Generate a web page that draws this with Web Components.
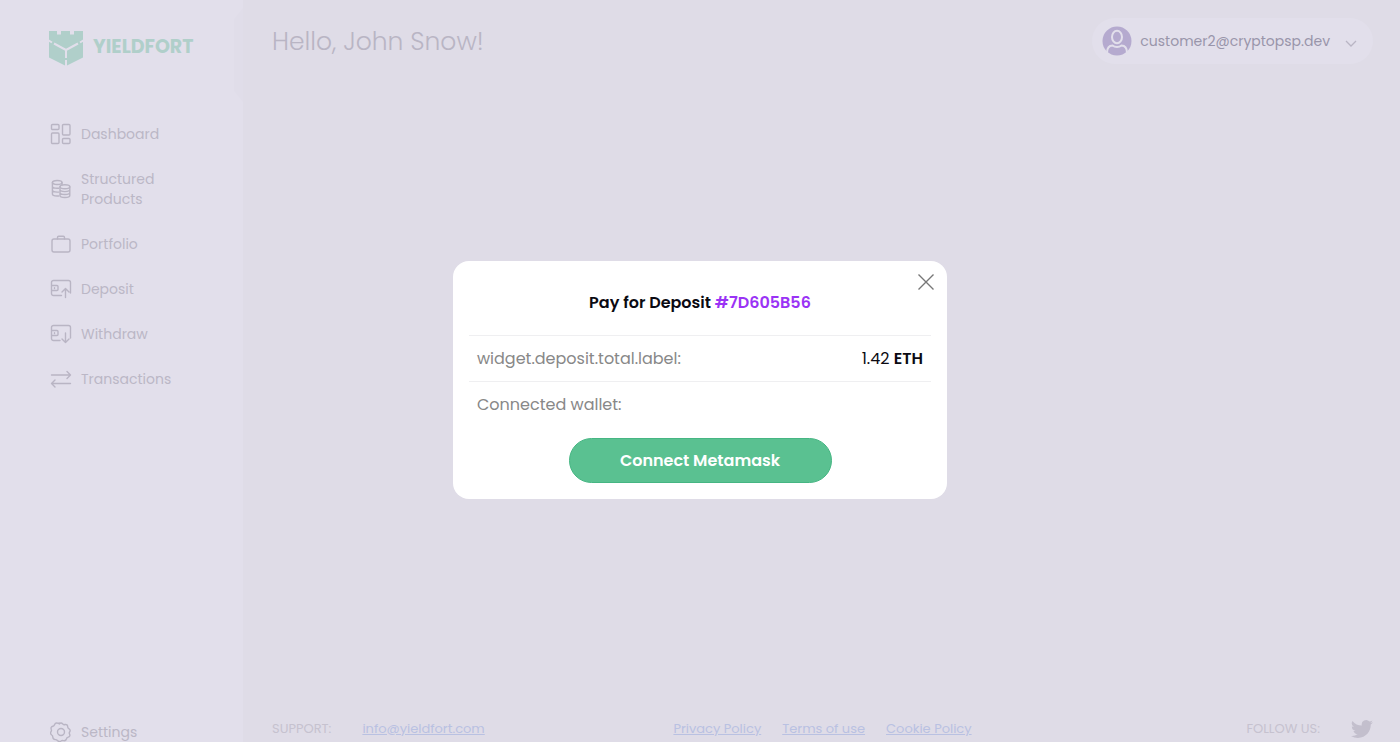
<!DOCTYPE html>
<html lang="en">
<head>
<meta charset="utf-8">
<title>Yieldfort</title>
<style>
  body { margin: 0; background: #dfdce7; font-family: Poppins, Inter, sans-serif; font-size: 14px; font-weight: 400; color: #b9b5c4; }
</style>
</head>
<body>
<yf-app>
  <yf-sidebar slot="side">
    <yf-nav-item icon="dashboard">Dashboard</yf-nav-item>
    <yf-nav-item icon="coins">Structured<br>Products</yf-nav-item>
    <yf-nav-item icon="case">Portfolio</yf-nav-item>
    <yf-nav-item icon="deposit">Deposit</yf-nav-item>
    <yf-nav-item icon="withdraw">Withdraw</yf-nav-item>
    <yf-nav-item icon="swap">Transactions</yf-nav-item>
    <yf-nav-item slot="bottom" icon="gear">Settings</yf-nav-item>
  </yf-sidebar>
  <yf-header slot="head">Hello, John Snow!<yf-account slot="account">customer2@cryptopsp.dev</yf-account></yf-header>
  <yf-footer slot="foot"></yf-footer>
</yf-app>
<yf-modal>
  <span slot="title">Pay for Deposit </span>
  <span slot="ref">#7D605B56</span>
  <yf-row label="widget.deposit.total.label:">1.42 <b>ETH</b></yf-row>
  <yf-row label="Connected wallet:"></yf-row>
  <yf-button slot="action">Connect Metamask</yf-button>
</yf-modal>

<script>
const define = (name, html) => customElements.define(name, class extends HTMLElement {
  constructor() {
    super();
    this.attachShadow({ mode: 'open' }).innerHTML = typeof html === 'function' ? html(this) : html;
  }
});

const icons = {
  dashboard: '<rect x="1.500" y="1.500" width="7.500" height="5" rx="1"/><rect x="12.500" y="1.500" width="7.500" height="10.500" rx="1"/><rect x="1.500" y="10" width="7.500" height="10.500" rx="1"/><rect x="12.500" y="15.500" width="7.500" height="5" rx="1"/>',
  coins: '<ellipse cx="7.200" cy="4.500" rx="4.800" ry="2"/><path d="M2.400 4.500v11.500c0 1.200 2.100 2 4.800 2h1.500M12 4.500v2.500M2.400 8.300c0 1.200 2.100 2 4.800 2h1.500M2.400 12.100c0 1.200 2.100 2 4.800 2h1.500"/><ellipse cx="14.900" cy="8.700" rx="4.900" ry="2"/><path d="M10 8.700v8.800c0 1.200 2.200 2 4.900 2s4.900-.8 4.900-2V8.700M10 11.600c0 1.200 2.200 2 4.900 2s4.900-.8 4.900-2M10 14.500c0 1.200 2.200 2 4.900 2s4.900-.8 4.900-2"/>',
  case: '<rect x="2" y="6" width="18" height="13" rx="2"/><path d="M7.500 6V4.500a1.200 1.200 0 0 1 1.200-1.200h4.600a1.200 1.200 0 0 1 1.200 1.200V6"/>',
  deposit: '<path d="M11.500 17.500H3.500a2 2 0 0 1-2-2V4.500a2 2 0 0 1 2-2h15a2 2 0 0 1 2 2v10.500M1.500 7.500h5.500a1 1 0 0 1 1 1v3a1 1 0 0 1-1 1H1.500M4.500 9.800v.7M15.500 19.500v-9M12 14l3.500-3.500 3.500 3.500"/>',
  withdraw: '<path d="M10 17.500H3.500a2 2 0 0 1-2-2V4.500a2 2 0 0 1 2-2h15a2 2 0 0 1 2 2v10.500M1.500 7.500h5.500a1 1 0 0 1 1 1v3a1 1 0 0 1-1 1H1.500M4.500 9.800v.7M15.500 10v9.500M12 16l3.500 3.500 3.500-3.500"/>',
  swap: '<path d="M1.500 7h19M17 3.500L20.500 7L17 10.500M20.500 15.500h-19M5 12l-3.500 3.500L5 19"/>',
  gear: '<circle cx="11" cy="11" r="3.500"/><path d="M9.200 3q1.800-2 3.600 0 1 1 2.200.5 2.600-.3 2.700 2.200 0 1.300 1.100 1.900 2.200 1.400.8 3.400-.7 1.100 0 2.100 1 2.300-1.500 3.100-1.300.3-1.600 1.500-.7 2.500-3.100 1.900-1.300-.5-2.400.4-2 1.300-3.600-.5-.8-1-2.100-.9-2.500-.2-2.500-2.600 0-1.300-1.100-2-2-1.500-.6-3.500.7-1.100.1-2.300-.7-2.400 1.700-3 1.200-.3 1.600-1.500.9-2.300 3.200-1.500 1 .2 1.500-.2z"/>'
};

define('yf-app', `<style>
  :host { display: grid; grid-template-columns: 243px 1fr; height: 100vh; overflow: hidden; }
  main { display: flex; flex-direction: column; justify-content: space-between; padding: 18px 27px 3px 29px; }
</style><slot name="side"></slot><main><slot name="head"></slot><slot name="foot"></slot></main>`);

define('yf-sidebar', `<style>
  :host { position: relative; display: flex; flex-direction: column; justify-content: space-between; box-sizing: border-box; height: 100vh; padding: 28px 48px 0 48px; background: #e2dfeb; }
  /* collapse tab on the sidebar's edge */
  :host::after { content: ""; position: absolute; top: 8px; right: 0; width: 9px; height: 94px; background: #e0dde9; clip-path: polygon(100% 0, 0 12%, 0 88%, 100% 100%); }
  .logo { display: flex; align-items: center; gap: 9px; color: #b0cfca; font: 700 19px/36px Poppins, Inter, sans-serif; text-decoration: none; }
  svg { width: 36px; height: 38px; }
  nav { display: flex; flex-direction: column; gap: 25px; margin-top: 58px; }
</style>
<div><a class="logo" href="#"><svg viewBox="0 0 36 38"><path fill="#b0cfca" d="M1 3h8v3.500h4V3h9v3.500h4V3h9v26.500L18 38 1 29.500z"/><path fill="none" stroke="#e2dfeb" stroke-width="2" d="M0 12l4 2.500M36 12l-4 2.500M6 15.500l12 6.500 12-6.500M18 22v8M18 32v6"/></svg>YIELDFORT</a>
<nav aria-label="Main"><slot></slot></nav></div><slot name="bottom"></slot>`);

define('yf-nav-item', el => `<style>
  :host { display: block; }
  a { display: flex; align-items: center; gap: 9px; padding-left: 2px; color: #bbb7c6; text-decoration: none; font-size: 14px; line-height: 20px; font-weight: 400; white-space: nowrap; }
  svg { width: 22px; height: 22px; margin: -1px 0; fill: none; stroke: #b9b5c4; stroke-width: 1.400; stroke-linecap: round; stroke-linejoin: round; }
</style><a href="#"><svg viewBox="0 0 22 22">${icons[el.getAttribute('icon')]}</svg><span><slot></slot></span></a>`);

define('yf-header', `<style>
  :host { display: flex; justify-content: space-between; align-items: center; }
  h1 { margin: 0; font-size: 25px; line-height: 45px; font-weight: 300; color: #b9b5c4; }
</style><h1><slot></slot></h1><slot name="account"></slot>`);

define('yf-account', `<style>
  button { display: flex; align-items: center; gap: 8px; height: 46px; padding: 0 16px 0 10px; border: 0; border-radius: 23px; background: #e2dfeb; color: #9995aa; font: 400 14px/24px Poppins, Inter, sans-serif; }
  .chev { margin: 5px 0 0 7px; }
</style><button type="button"><svg width="30" height="30" viewBox="0 0 30 30"><circle cx="15" cy="15" r="14.500" fill="#b5aacf"/><g fill="none" stroke="#e2dfeb" stroke-width="2"><ellipse cx="15" cy="11" rx="5" ry="6.200"/><path d="M5 27c0-5.500 2-7.500 5.500-7.500 2.500 2 6.500 2 9 0 3.500 0 5.500 2 5.500 7.500"/></g></svg><span><slot></slot></span><svg class="chev" width="12" height="8" viewBox="0 0 12 8" fill="none" stroke="#b9b5c4" stroke-width="1.300"><path d="M1 1l5 5 5-5"/></svg></button>`);

define('yf-footer', `<style>
  :host { display: grid; grid-template-columns: 1fr auto 1fr; align-items: center; font-size: 13px; line-height: 20px; font-weight: 400; color: #c6c2cf; }
  div { display: flex; align-items: center; gap: 21px; }
  .wide { gap: 31px; }
  .end { justify-content: flex-end; }
  a { color: #b9c1e2; }
  svg { display: block; }
</style>
<div class="wide"><span>SUPPORT:</span><a href="mailto:info@yieldfort.com">info@yieldfort.com</a></div>
<div><a href="#">Privacy Policy</a><a href="#">Terms of use</a><a href="#">Cookie Policy</a></div>
<div class="wide end"><span>FOLLOW US:</span><a href="#" aria-label="Twitter"><svg width="22" height="20" viewBox="0 2 24 20" fill="#c3bfcd"><path d="M23.950 4.570a10 10 0 0 1-2.820.77 4.960 4.960 0 0 0 2.160-2.720 9.900 9.900 0 0 1-3.120 1.190 4.920 4.920 0 0 0-8.390 4.480A13.900 13.900 0 0 1 1.640 3.160a4.920 4.920 0 0 0 1.520 6.570 4.900 4.900 0 0 1-2.230-.61v.06a4.920 4.920 0 0 0 3.950 4.830 5 5 0 0 1-2.210.08 4.940 4.940 0 0 0 4.600 3.420A9.870 9.870 0 0 1 0 19.540a13.900 13.900 0 0 0 7.550 2.210c9.050 0 14-7.500 14-13.980 0-.21 0-.42-.02-.63a9.900 9.900 0 0 0 2.420-2.570z"/></svg></a></div>`);

define('yf-modal', `<style>
  :host { position: fixed; inset: 0; display: grid; place-items: center; padding-top: 18px; }
  section { position: relative; box-sizing: border-box; width: 494px; max-width: 100%; padding: 26px 16px 16px; border-radius: 16px; background: #fff; }
  h2 { margin: 0 0 16px; font-size: 16px; line-height: 32px; font-weight: 600; text-align: center; color: #0b0a12; }
  em { font-style: normal; color: #9a33f5; }
  .close { position: absolute; top: 12px; right: 12px; display: block; padding: 0; border: 0; background: none; width: 18px; height: 18px; }
  .action { display: flex; justify-content: center; margin-top: 11px; }
  svg { display: block; }
</style>
<section role="dialog" aria-modal="true" aria-labelledby="t">
  <button class="close" type="button" aria-label="Close"><svg width="18" height="18" viewBox="0 0 18 18" stroke="#777" stroke-width="1.400"><path d="M1.500 1.500l15 15M16.500 1.500l-15 15"/></svg></button>
  <h2 id="t"><slot name="title"></slot> <em><slot name="ref"></slot></em></h2>
  <slot></slot>
  <div class="action"><slot name="action"></slot></div>
</section>`);

define('yf-row', el => `<style>
  :host { display: flex; justify-content: space-between; padding: 0 8px; border-top: 1px solid #efeff1; font-size: 16px; line-height: 46px; height: 45px; color: #0b0a12; font-weight: 400; }
  .label { color: #888; }
  ::slotted(b) { font-weight: 600; }
</style><span class="label">${el.getAttribute('label')}</span><span><slot></slot></span>`);

define('yf-button', `<style>
  button { width: 263px; height: 45px; border: 1px solid #46b683; border-radius: 23px; background: #5ac191; color: #fff; font: 600 16px/24px Poppins, Inter, sans-serif; }
</style><button type="button"><slot></slot></button>`);
</script>
</body>
</html>
